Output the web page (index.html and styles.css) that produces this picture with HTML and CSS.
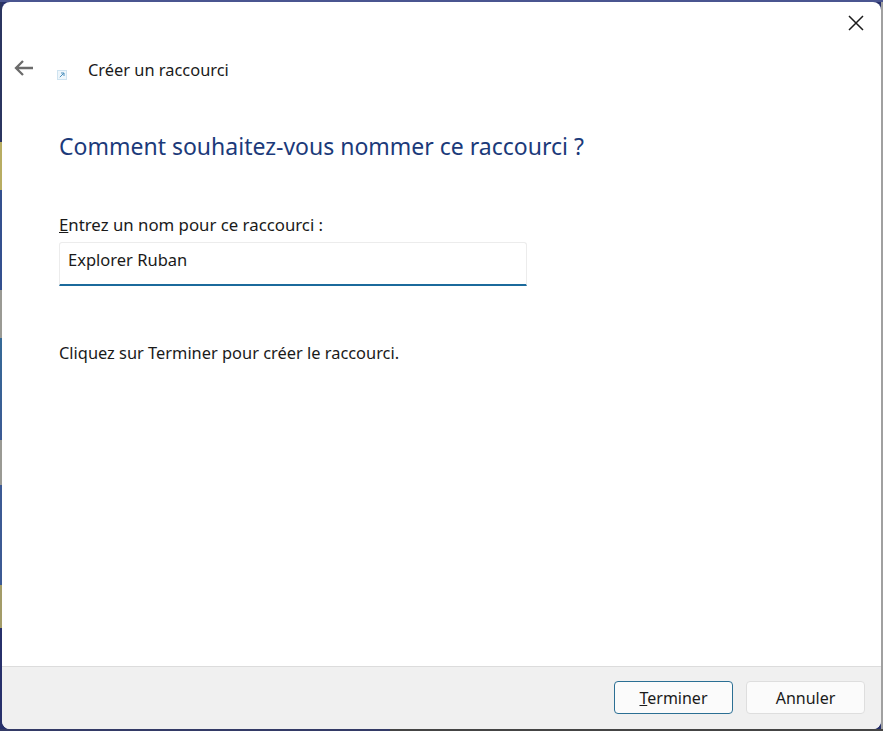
FILE: index.html
```html
<!DOCTYPE html>
<html lang="fr">
<head>
    <meta charset="UTF-8">
    <title>Créer un raccourci</title>
    <link rel="stylesheet" href="styles.css">
</head>
<body>
    <div class="dialog">
        <div class="close-row">
            <button class="close" aria-label="Fermer">
                <svg width="16" height="16" viewBox="0 0 16 16"><path d="M1 1L15 15M15 1L1 15" stroke="#1c1c1c" stroke-width="1.5" fill="none"/></svg>
            </button>
        </div>
        <div class="title-row">
            <svg class="back" width="20" height="16" viewBox="0 0 20 16"><path d="M9 1L2 8L9 15M2 8H19" stroke="#6b6b6b" stroke-width="2.3" fill="none"/></svg>
            <svg class="shortcut" width="10" height="10" viewBox="0 0 10 10"><rect x="0.5" y="0.5" width="9" height="9" fill="#eef6fb" stroke="#cfe3f0"/><path d="M2.8 7.2L6.8 3.2M4 3H7V6" stroke="#4a8fbd" stroke-width="1" fill="none"/></svg>
            <span class="title">Créer un raccourci</span>
        </div>
        <main class="content">
            <h1>Comment souhaitez-vous nommer ce raccourci ?</h1>
            <label class="name-label" for="nom"><u>E</u>ntrez un nom pour ce raccourci :</label>
            <input class="name-input" id="nom" type="text" value="Explorer Ruban">
            <p class="hint">Cliquez sur Terminer pour créer le raccourci.</p>
        </main>
        <footer>
            <button class="button primary"><u>T</u>erminer</button>
            <button class="button">Annuler</button>
        </footer>
    </div>
</body>
</html>
```

FILE: styles.css
```css
html, body {
    height: 100%;
}
body {
    margin: 0;
    padding: 2px;
    box-sizing: border-box;
    font-family: "Noto Sans", sans-serif;
    font-size: 16px;
    color: #1a1a1a;
    background-color: #27306b;
    background-repeat: no-repeat;
    background-position: top left, bottom left, top right, top left;
    background-size: 100% 2px, 100% 2px, 2px 100%, 2px 100%;
    background-image:
        linear-gradient(#4a5590, #4a5590),
        linear-gradient(to right, #333a66 0, #333a66 390px, #444444 390px),
        linear-gradient(#a0a0a0, #a0a0a0),
        linear-gradient(to bottom,
            #2b3560 0, #2b3560 142px,
            #b8ad62 142px, #b8ad62 190px,
            #34508f 190px, #34508f 290px,
            #9a9a94 290px, #9a9a94 338px,
            #356a97 338px, #3c5a94 440px,
            #9a9a94 440px, #9a9a94 485px,
            #3c5a94 485px, #3c5a94 585px,
            #a39c68 585px, #a39c68 628px,
            #27306b 628px);
}
.dialog {
    height: 100%;
    display: flex;
    flex-direction: column;
    background: #fff;
    border-radius: 8px;
    overflow: hidden;
}
.close-row {
    display: flex;
    justify-content: flex-end;
    padding: 13px 17px 0 0;
}
.close {
    display: flex;
    padding: 0;
    border: 0;
    background: none;
}
.title-row {
    display: flex;
    align-items: center;
    height: 28px;
    margin-top: 24px;
    padding-left: 12px;
}
.back {
    margin-top: -2px;
}
.shortcut {
    margin: 12px 0 0 23px;
}
.title {
    margin-left: 21px;
    font-size: 16.4px;
}
.content {
    flex: 1;
    display: flex;
    flex-direction: column;
    align-items: flex-start;
    padding: 0 57px;
}
h1 {
    margin: 47px 0 0;
    font-size: 23px;
    font-weight: 400;
    line-height: 32px;
    color: #1b3a7a;
}
.name-label {
    margin-top: 52px;
    font-size: 16.8px;
    line-height: 22px;
}
.name-input {
    width: 468px;
    height: 44px;
    margin-top: 6px;
    padding: 0 8px 8px;
    box-sizing: border-box;
    border: 1px solid #ececec;
    border-bottom: 2px solid #1b6a9c;
    border-radius: 3px 3px 0 0;
    outline: none;
    font: inherit;
    font-size: 16.5px;
    color: #1a1a1a;
}
.hint {
    margin: 56px 0 0;
    font-size: 16.4px;
    line-height: 22px;
}
footer {
    display: flex;
    justify-content: flex-end;
    gap: 13px;
    height: 63px;
    padding: 14px 16px 0 0;
    box-sizing: border-box;
    background: #f0f0f0;
    border-top: 1px solid #dcdcdc;
}
.button {
    width: 119px;
    height: 33px;
    padding: 0;
    border: 1px solid #dedede;
    border-radius: 4px;
    background: #fbfbfb;
    font: inherit;
    font-size: 16px;
    color: #1a1a1a;
}
.primary {
    border-color: #2b6f94;
}
```
